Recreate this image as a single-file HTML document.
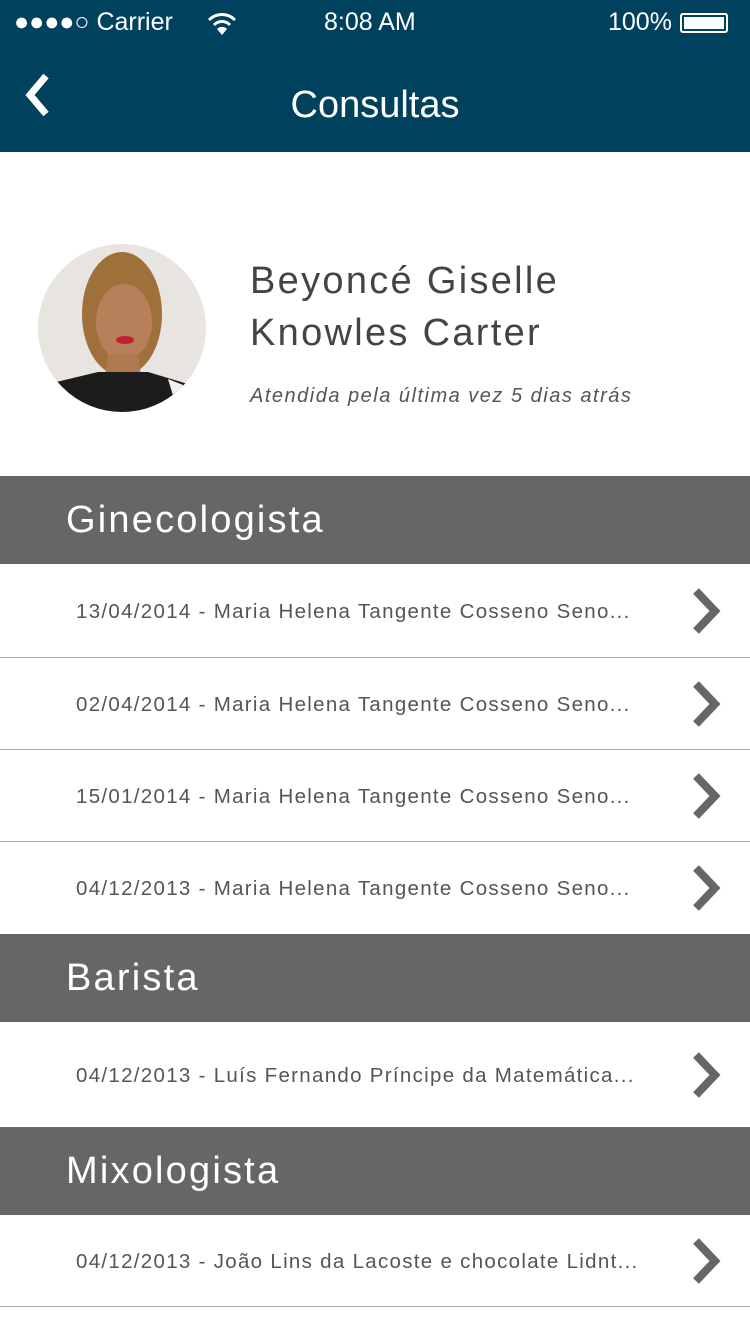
<!DOCTYPE html>
<html><head><meta charset="utf-8"><style>
body{margin:0;width:750px;height:1334px;background:#fff;font-family:"Liberation Sans",sans-serif;position:relative;overflow:hidden}
.nav{position:absolute;left:0;top:0;width:750px;height:152px;background:#00425e}
.st{position:absolute;top:8px;color:#fff;font-size:25px}
.title{position:absolute;top:84px;width:750px;text-align:center;color:#fff;font-size:38px}
.sec{position:absolute;left:0;width:750px;height:88px;background:#666;color:#fff;font-size:38px;box-sizing:border-box;padding-left:66px;line-height:88px;letter-spacing:2.2px}
.row{position:absolute;left:0;width:750px;border-bottom:1px solid #aaa;box-sizing:border-box}
.row span{position:absolute;left:76px;top:50%;transform:translateY(-46%);font-size:20.5px;color:#555;letter-spacing:1.3px}
.row svg{position:absolute;left:688px;top:50%;margin-top:-23px}
</style></head><body>
<div class="nav">
<div class="st" style="left:14px">●●●●○ Carrier</div>
<svg style="position:absolute;left:207px;top:12px" width="30" height="24" viewBox="0 0 30 24"><path d="M2 8 A18 18 0 0 1 28 8" stroke="#fff" stroke-width="3" fill="none"/><path d="M7 13 A11 11 0 0 1 23 13" stroke="#fff" stroke-width="3" fill="none"/><path d="M10 17 L15 23 L20 17 A7 7 0 0 0 10 17Z" fill="#fff"/></svg>
<div class="st" style="left:324px">8:08 AM</div>
<div class="st" style="left:608px">100%</div>
<div style="position:absolute;left:680px;top:13px;width:48px;height:20px;border:2px solid #fff;border-radius:3px;box-sizing:border-box;padding:2px"><div style="background:#fff;width:100%;height:100%"></div></div>
<svg style="position:absolute;left:20px;top:72px" width="32" height="46" viewBox="0 0 32 46"><path d="M26 4 L10 23 L26 42" stroke="#fff" stroke-width="7" fill="none"/></svg>
<div class="title">Consultas</div>
</div>
<svg style="position:absolute;left:38px;top:244px" width="168" height="168" viewBox="0 0 168 168">
<defs><clipPath id="c"><circle cx="84" cy="84" r="84"/></clipPath></defs>
<g clip-path="url(#c)"><rect width="168" height="168" fill="#e8e4e0"/>
<ellipse cx="84" cy="70" rx="40" ry="62" fill="#a0703a"/>
<ellipse cx="86" cy="78" rx="28" ry="38" fill="#b8805a"/>
<path d="M70 110 L100 110 L104 140 L66 140Z" fill="#b07850"/>
<path d="M0 168 L10 140 L60 128 L110 128 L150 140 L168 168Z" fill="#1c1c1c"/>
<path d="M130 135 L168 150 L168 168 L140 168Z" fill="#f2f0ea"/>
<ellipse cx="87" cy="96" rx="9" ry="4" fill="#c02030"/></g></svg>
<div style="position:absolute;left:250px;top:255px;font-size:38px;color:#444;line-height:52px;letter-spacing:2.3px">Beyoncé Giselle<br>Knowles Carter</div>
<div style="position:absolute;left:250px;top:385px;font-size:20px;color:#555;font-style:italic;letter-spacing:1.5px">Atendida pela última vez 5 dias atrás</div>
<div class="sec" style="top:476px">Ginecologista</div>
<div class="row" style="top:564px;height:94px"><span>13/04/2014 - Maria Helena Tangente Cosseno Seno...</span><svg width="36" height="46"><path d="M8 3 L27 23 L8 43" stroke="#666" stroke-width="8" fill="none"/></svg></div>
<div class="row" style="top:658px;height:92px"><span>02/04/2014 - Maria Helena Tangente Cosseno Seno...</span><svg width="36" height="46"><path d="M8 3 L27 23 L8 43" stroke="#666" stroke-width="8" fill="none"/></svg></div>
<div class="row" style="top:750px;height:92px"><span>15/01/2014 - Maria Helena Tangente Cosseno Seno...</span><svg width="36" height="46"><path d="M8 3 L27 23 L8 43" stroke="#666" stroke-width="8" fill="none"/></svg></div>
<div class="row" style="top:842px;height:92px;border:none"><span>04/12/2013 - Maria Helena Tangente Cosseno Seno...</span><svg width="36" height="46"><path d="M8 3 L27 23 L8 43" stroke="#666" stroke-width="8" fill="none"/></svg></div>
<div class="sec" style="top:934px">Barista</div>
<div class="row" style="top:1022px;height:105px;border:none"><span>04/12/2013 - Luís Fernando Príncipe da Matemática...</span><svg width="36" height="46"><path d="M8 3 L27 23 L8 43" stroke="#666" stroke-width="8" fill="none"/></svg></div>
<div class="sec" style="top:1127px">Mixologista</div>
<div class="row" style="top:1215px;height:92px"><span>04/12/2013 - João Lins da Lacoste e chocolate Lidnt...</span><svg width="36" height="46"><path d="M8 3 L27 23 L8 43" stroke="#666" stroke-width="8" fill="none"/></svg></div>
</body></html>
